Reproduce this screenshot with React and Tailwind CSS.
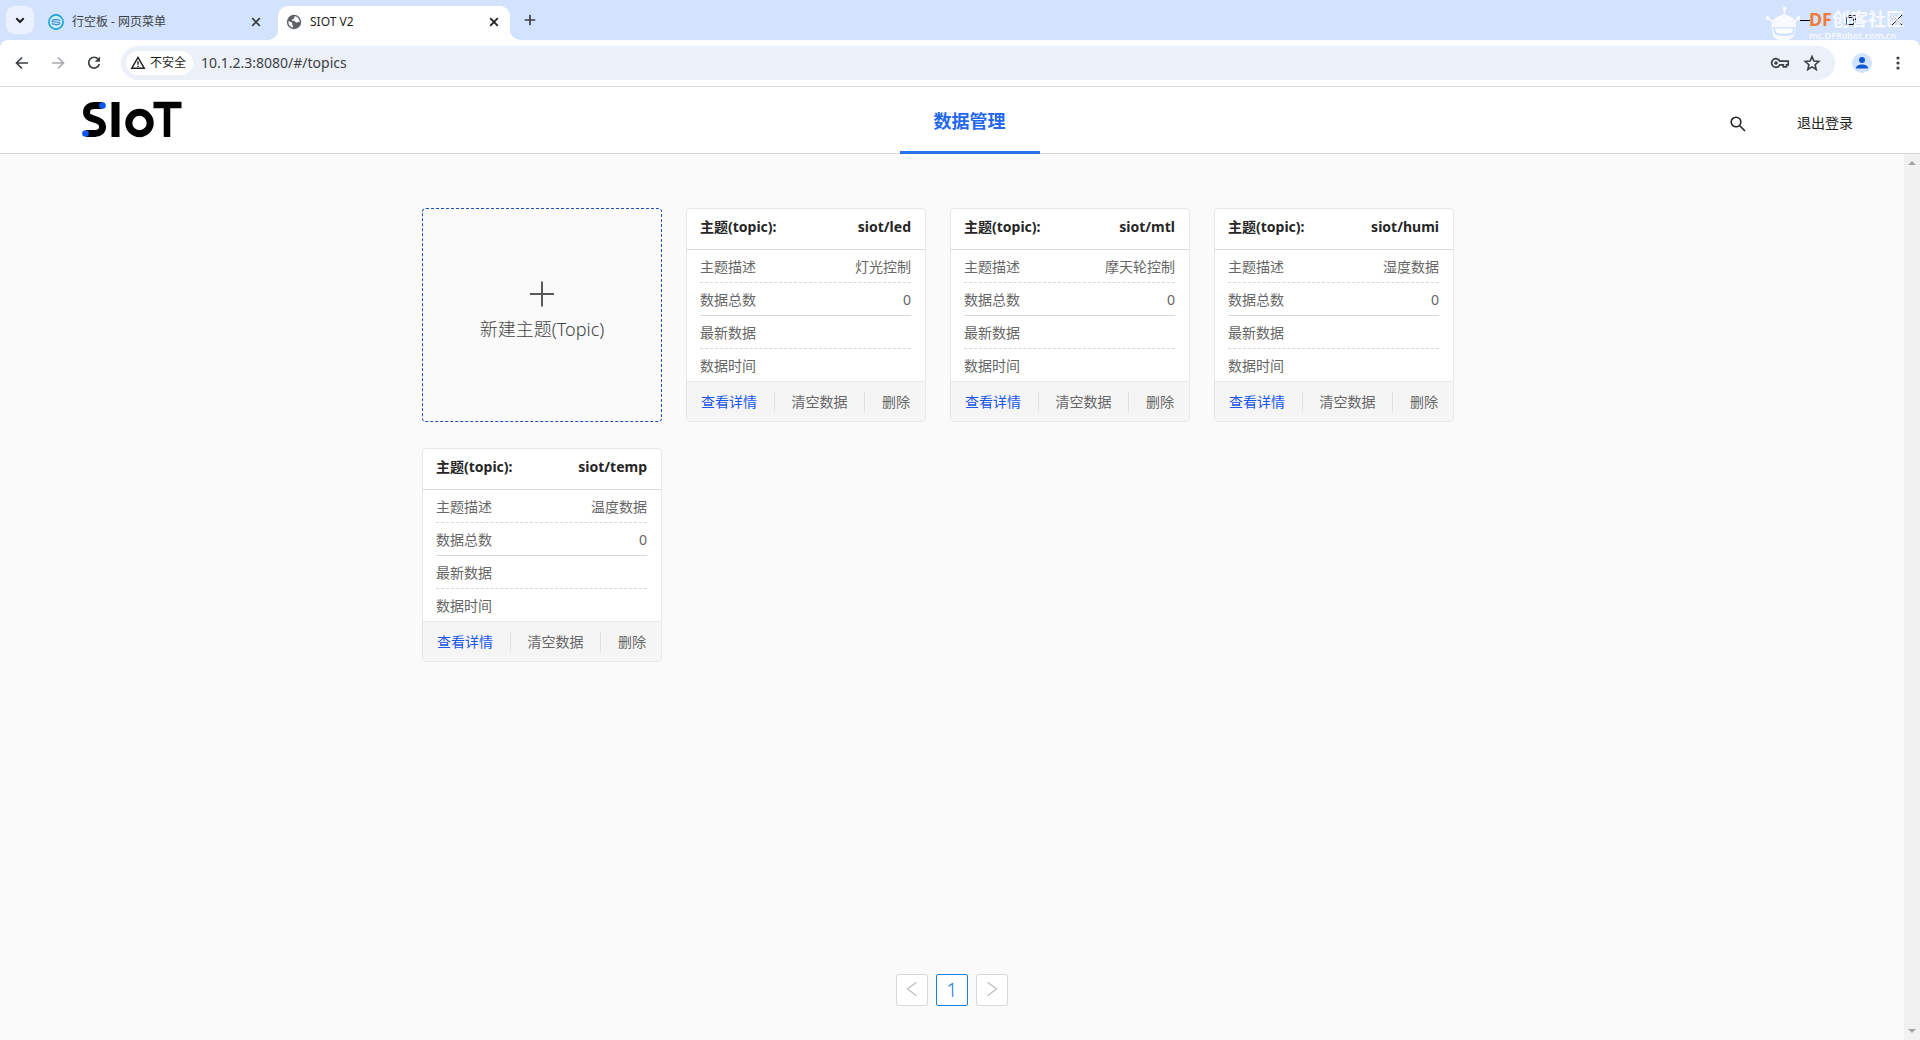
import React from "react";

const TOPICS = [
  { name: "siot/led", desc: "灯光控制", count: 0 },
  { name: "siot/mtl", desc: "摩天轮控制", count: 0 },
  { name: "siot/humi", desc: "湿度数据", count: 0 },
  { name: "siot/temp", desc: "温度数据", count: 0 },
];

function Close({ className }) {
  return (
    <svg className={className} viewBox="0 0 16 16" fill="none" stroke="currentColor" strokeWidth="1.8" aria-hidden="true">
      <path d="M4.2 4.2l7.6 7.6M11.8 4.2l-7.6 7.6" />
    </svg>
  );
}

function Watermark() {
  return (
    <div className="pointer-events-none absolute top-[6px] right-[16px] flex items-start gap-[8px]">
      <svg className="h-[34px] w-[36px]" viewBox="0 0 36 34" aria-hidden="true">
        <g fill="#fff" opacity="0.85">
          <circle cx="19.5" cy="2.500" r="1.900" />
          <path d="M18.700 3h1.600v6h-1.600z" />
          <circle cx="2.500" cy="12" r="1.900" />
          <circle cx="33.500" cy="12" r="1.900" />
          <path d="M2.500 11l6 4-1 1.500-6-4zM33.500 11l-5 4 1 1.500 5-4z" />
          <path d="M6.500 21c-.5-6 3-9 6.500-10.500l6-2.500 6 2.500c4 1.500 6.500 5 6 10.500l-2 9-5 4H13l-5-4z" />
        </g>
        <path d="M7.500 21h23l-2 7.500c-6 2-13 2-19 0z" fill="#d3e3fd" />
        <path d="M10 22.500h18l-1.200 4c-5 1.300-10.600 1.300-15.600 0z" fill="#fff" />
      </svg>
      <div className="leading-none font-bold">
        <div className="text-[18px] leading-[26px] whitespace-nowrap text-white/80">
          <span className="text-[#ee7b3c]">DF</span>创客社区
        </div>
        <div className="text-[9px] leading-[8px] font-semibold text-white/80">mc.DFRobot.com.cn</div>
      </div>
    </div>
  );
}

function TabStrip() {
  return (
    <div className="relative flex h-10 items-end bg-[#d3e3fd] text-[12px] text-[#1f1f1f]">
      <button aria-label="搜索标签页" className="mb-[6px] ml-[6px] flex h-7 w-7 items-center justify-center rounded-[9px] bg-[#ebf1fe]">
        <svg className="h-4 w-4" viewBox="0 0 16 16" fill="none" stroke="currentColor" strokeWidth="2" aria-hidden="true">
          <path d="M4.300 6.300L8 10l3.700-3.700" />
        </svg>
      </button>
      <div className="ml-[14px] flex h-[34px] w-[230px] items-center pb-[3px]">
        <svg className="h-4 w-4 shrink-0" viewBox="0 0 16 16" fill="none" aria-hidden="true">
          <circle cx="8" cy="8" r="7.100" fill="#c9effa" stroke="#1ba4d6" strokeWidth="1.700" />
          <path d="M12.300 6.600C10.500 5.500 5 5.300 4.200 6.700S6 8 8 8s4.500.2 3.600 1.600S5.500 10.700 3.700 9.600" stroke="#4a8ad6" strokeWidth="1.200" />
        </svg>
        <span className="ml-2 flex-1 truncate text-[#3c4043]">行空板 - 网页菜单</span>
        <button aria-label="关闭" className="mr-[14px] text-[#3c4043]"><Close className="h-4 w-4" /></button>
      </div>
      <div className="relative flex h-[34px] w-[232px] items-center rounded-t-[10px] bg-white pb-[3px] pl-[8px]">
        <svg className="absolute bottom-0 -left-[10px] h-[10px] w-[10px]" viewBox="0 0 10 10" aria-hidden="true"><path d="M10 0v10H0A10 10 0 0010 0z" fill="#fff" /></svg>
        <svg className="absolute -right-[10px] bottom-0 h-[10px] w-[10px]" viewBox="0 0 10 10" aria-hidden="true"><path d="M0 0v10h10A10 10 0 010 0z" fill="#fff" /></svg>
        <svg className="h-4 w-4 shrink-0" viewBox="0 0 16 16" aria-hidden="true">
          <circle cx="8" cy="8" r="7.200" fill="#5f6368" />
          <path d="M8.500 2.300c-.6 1.400.3 1.700-.6 2.500-.7.700-1.800.3-2 1.300-.1.900 1.200.8 2.300.9 1.200.1.900 1.400 2.200 1.500.9.100 1.700-.8 3.200-.5.100-2.900-2-5.400-5.100-5.700zM2.400 7.300c1.200.5 2.800.6 3.600 1.500.6.800-.2 1.600.6 2.400.5.500.5 1.500.6 2.400-2.900-.4-5.200-3.300-4.800-6.300z" fill="#fff" />
        </svg>
        <span className="ml-2 flex-1">SIOT V2</span>
        <button aria-label="关闭" className="mr-2"><Close className="h-4 w-4" /></button>
      </div>
      <button aria-label="新标签页" className="mb-[12px] ml-[12px] text-[#3c4043]">
        <svg className="h-4 w-4" viewBox="0 0 16 16" fill="none" stroke="currentColor" strokeWidth="1.700" aria-hidden="true">
          <path d="M8 2.700v10.600M2.700 8h10.600" />
        </svg>
      </button>
      <div className="ml-auto flex h-full items-center gap-[34px] pr-[17px] text-black">
        <button aria-label="最小化"><svg className="h-3 w-3" viewBox="0 0 12 12" stroke="currentColor" aria-hidden="true"><path d="M1 6.500h10" /></svg></button>
        <button aria-label="还原"><svg className="h-3 w-3" viewBox="0 0 12 12" fill="none" stroke="currentColor" aria-hidden="true"><path d="M1.500 3.500h7v7h-7zM3.500 3.500v-2h7v7h-2" /></svg></button>
        <button aria-label="关闭窗口"><svg className="h-3 w-3" viewBox="0 0 12 12" stroke="currentColor" aria-hidden="true"><path d="M1 1l10 10M11 1L1 11" /></svg></button>
      </div>
      <Watermark />
    </div>
  );
}

function Toolbar() {
  return (
    <div className="bg-[#d3e3fd]">
      <div className="flex h-[47px] items-center rounded-t-[8px] border-b border-[#dadce0] bg-white px-[14px] text-[#3c4043]">
        <button aria-label="后退">
          <svg className="h-4 w-4" viewBox="0 0 16 16" fill="none" stroke="currentColor" strokeWidth="1.700" aria-hidden="true"><path d="M14 8H3M8 2.500L2.500 8 8 13.500" /></svg>
        </button>
        <button aria-label="前进" className="ml-5 text-[#a9abae]">
          <svg className="h-4 w-4" viewBox="0 0 16 16" fill="none" stroke="currentColor" strokeWidth="1.700" aria-hidden="true"><path d="M2 8h11M8 2.500L13.500 8 8 13.500" /></svg>
        </button>
        <button aria-label="重新加载" className="ml-5">
          <svg className="h-4 w-4" viewBox="0 0 16 16" aria-hidden="true">
            <path d="M12.300 4.300A5.400 5.400 0 1013.300 9" fill="none" stroke="currentColor" strokeWidth="1.700" />
            <path d="M14 1.500v5.300H8.700z" fill="currentColor" />
          </svg>
        </button>
        <div className="ml-[19px] flex h-[34px] flex-1 items-center rounded-full bg-[#ecf0f9] pr-[14px] pl-[5px]">
          <button className="flex h-6 items-center gap-1 rounded-full bg-white pr-[7px] pl-1 text-[12px] text-[#1f1f1f]">
            <svg className="h-4 w-4" viewBox="0 0 16 16" fill="none" stroke="currentColor" strokeWidth="1.400" aria-hidden="true">
              <path d="M8 2.300L14.300 13.300H1.700zM8 6.200v3.600M8 10.700v1.300" />
            </svg>
            不安全
          </button>
          <input aria-label="地址" defaultValue="10.1.2.3:8080/#/topics" className="ml-[8px] min-w-0 flex-1 bg-transparent pb-[2px] text-[14px] text-[#3c4043] outline-none" />
          <button aria-label="密码">
            <svg className="h-[18px] w-[20px]" viewBox="0 0 20 18" fill="none" stroke="currentColor" strokeWidth="1.700" aria-hidden="true">
              <path d="M9.800 7.200h8.400v3.600h-1.700v2h-3.200v-2H9.800A4.300 4.300 0 119.800 7.200z" />
              <circle cx="6" cy="9" r="1.800" fill="currentColor" stroke="none" />
            </svg>
          </button>
          <button aria-label="收藏" className="ml-[13px]">
            <svg className="h-[18px] w-[18px]" viewBox="0 0 18 18" fill="none" stroke="currentColor" strokeWidth="1.600" aria-hidden="true">
              <path d="M9 2.600l1.900 4.500 4.900.4-3.700 3.200 1.100 4.800L9 12.900l-4.200 2.600 1.100-4.800-3.700-3.200 4.900-.4z" />
            </svg>
          </button>
        </div>
        <button aria-label="用户" className="ml-[17px] flex h-5 w-5 items-center justify-center rounded-full bg-[#d3e3fd] text-[#0b57d0]">
          <svg className="h-5 w-5" viewBox="0 0 20 20" fill="currentColor" aria-hidden="true"><circle cx="10" cy="7" r="3" /><path d="M4 15.500c0-3 3-4 6-4s6 1 6 4z" /></svg>
        </button>
        <button aria-label="菜单" className="ml-[18px]">
          <svg className="h-4 w-4" viewBox="0 0 16 16" fill="currentColor" aria-hidden="true"><circle cx="8" cy="3" r="1.600" /><circle cx="8" cy="8" r="1.600" /><circle cx="8" cy="13" r="1.600" /></svg>
        </button>
      </div>
    </div>
  );
}

function Logo() {
  return (
    <svg className="h-[38px] w-[102px]" viewBox="0 0 102 38" role="img" aria-label="SIoT" fill="none" stroke="#000" strokeWidth="7">
      <path d="M21.500 4.500H13.500C8 4.500 5.500 7.500 5.500 11.300c0 4 2.500 5.600 7.500 6.900 6 1.600 8.500 3.500 8.500 7.500 0 4.300-3 6.800-7.500 6.800H5" />
      <path d="M34.500 1v35" strokeWidth="8" />
      <circle cx="58.500" cy="22" r="10.700" />
      <path d="M72.500 4h28M86 4v32" strokeWidth="6.500" />
      <circle cx="21.500" cy="4.500" r="3.300" fill="#0b57f5" stroke="none" />
      <circle cx="4.500" cy="32.500" r="3.300" fill="#0b57f5" stroke="none" />
    </svg>
  );
}

function Header() {
  return (
    <header className="grid h-[67px] grid-cols-[1fr_140px_1fr] border-b border-[#d6d6d6] bg-white pr-[62px] pl-[81px]">
      <a href="#/" className="flex items-center"><Logo /></a>
      <nav className="-mb-px">
        <a href="#/topics" className="flex h-full items-center justify-center border-b-[3px] border-[#2a72ec] pt-[4px] text-[18px] font-bold text-[#2468f2]">数据管理</a>
      </nav>
      <div className="flex items-center justify-end pt-[5px]">
        <button aria-label="搜索" className="mt-[2px] mr-[50px] text-[#222]">
          <svg className="h-[18px] w-[18px]" viewBox="0 0 18 18" fill="none" stroke="currentColor" strokeWidth="1.600" aria-hidden="true"><circle cx="7" cy="7" r="4.800" /><path d="M10.500 10.500l5.500 5.500" /></svg>
        </button>
        <button className="pr-[5px] text-[14px] text-[#222]">退出登录</button>
      </div>
    </header>
  );
}

function Row({ label, value, line }) {
  return (
    <div className={"flex h-[33px] items-center justify-between border-b " + line}>
      <dt>{label}</dt>
      <dd>{value}</dd>
    </div>
  );
}

function TopicCard({ topic }) {
  return (
    <article className="rounded-[4px] border border-[#e8e8e8] bg-white text-[14px] text-[#666]">
      <h2 className="flex h-[41px] items-center justify-between border-b border-[#d9d9d9] pr-[14px] pb-[6px] pl-[13px] font-bold text-[#262626]">
        <span>主题(topic):</span>
        <span>{topic.name}</span>
      </h2>
      <dl className="pr-[14px] pl-[13px]">
        <Row label="主题描述" value={topic.desc} line="border-dashed border-[#d9d9d9]" />
        <Row label="数据总数" value={topic.count} line="border-[#d9d9d9]" />
        <Row label="最新数据" value="" line="border-dashed border-[#d9d9d9]" />
        <Row label="数据时间" value="" line="border-transparent" />
      </dl>
      <footer className="-mt-px flex h-[40px] items-center justify-between rounded-b-[4px] border-t border-[#e8e8e8] bg-[#f5f5f5] pr-[15px] pl-[14px]">
        <button className="text-[#1a56e8]">查看详情</button>
        <span className="h-5 w-px bg-[#e2e2e2]" />
        <button>清空数据</button>
        <span className="h-5 w-px bg-[#e2e2e2]" />
        <button>删除</button>
      </footer>
    </article>
  );
}

function Pager() {
  const box = "flex h-8 w-8 items-center justify-center rounded-[2px] border bg-white ";
  return (
    <nav aria-label="分页" className="flex justify-center gap-2">
      <button aria-label="上一页" className={box + "border-[#d9d9d9] text-[#bfbfbf]"}>
        <svg className="h-4 w-4" viewBox="0 0 16 16" fill="none" stroke="currentColor" strokeWidth="1.300" aria-hidden="true"><path d="M12.500 .3L3.500 7l9 6.700" /></svg>
      </button>
      <button aria-current="page" className={box + "border-[#1880e0] text-[20px] font-light text-[#1880e0]"}>1</button>
      <button aria-label="下一页" className={box + "border-[#d9d9d9] text-[#bfbfbf]"}>
        <svg className="h-4 w-4" viewBox="0 0 16 16" fill="none" stroke="currentColor" strokeWidth="1.300" aria-hidden="true"><path d="M3.500 .3L12.500 7l-9 6.700" /></svg>
      </button>
    </nav>
  );
}

export default function App() {
  return (
    <div className="flex min-h-screen flex-col bg-[#fafafa] font-['Noto_Sans','Noto_Sans_CJK_SC',sans-serif]">
      <TabStrip />
      <Toolbar />
      <Header />
      <div className="flex flex-1">
        <main className="flex flex-1 flex-col pt-[54px] pb-[34px]">
          <section className="mx-auto grid w-full max-w-[1060px] grid-cols-[repeat(auto-fill,240px)] gap-x-6 gap-y-[26px]">
            <button className="flex h-[214px] flex-col items-center justify-center rounded-[4px] border border-dashed border-[#1f4fc0] pb-[6px] text-[18px] font-light text-[#444]">
              <svg className="h-[26px] w-[26px]" viewBox="0 0 26 26" stroke="#595959" strokeWidth="2" aria-hidden="true"><path d="M13 .5v25M1 13h24" /></svg>
              <span className="mt-[9px]">新建主题(Topic)</span>
            </button>
            {TOPICS.map((t) => (
              <TopicCard key={t.name} topic={t} />
            ))}
          </section>
          <div className="mt-auto">
            <Pager />
          </div>
        </main>
        <div className="flex w-4 flex-col items-center justify-between bg-[#f1f1f1] py-[6px] text-[#a3a3a3]" aria-hidden="true">
          <svg className="h-[6px] w-2" viewBox="0 0 8 6" fill="currentColor"><path d="M0 5l4-4 4 4z" /></svg>
          <svg className="h-[6px] w-2" viewBox="0 0 8 6" fill="currentColor"><path d="M0 1l4 4 4-4z" /></svg>
        </div>
      </div>
    </div>
  );
}
